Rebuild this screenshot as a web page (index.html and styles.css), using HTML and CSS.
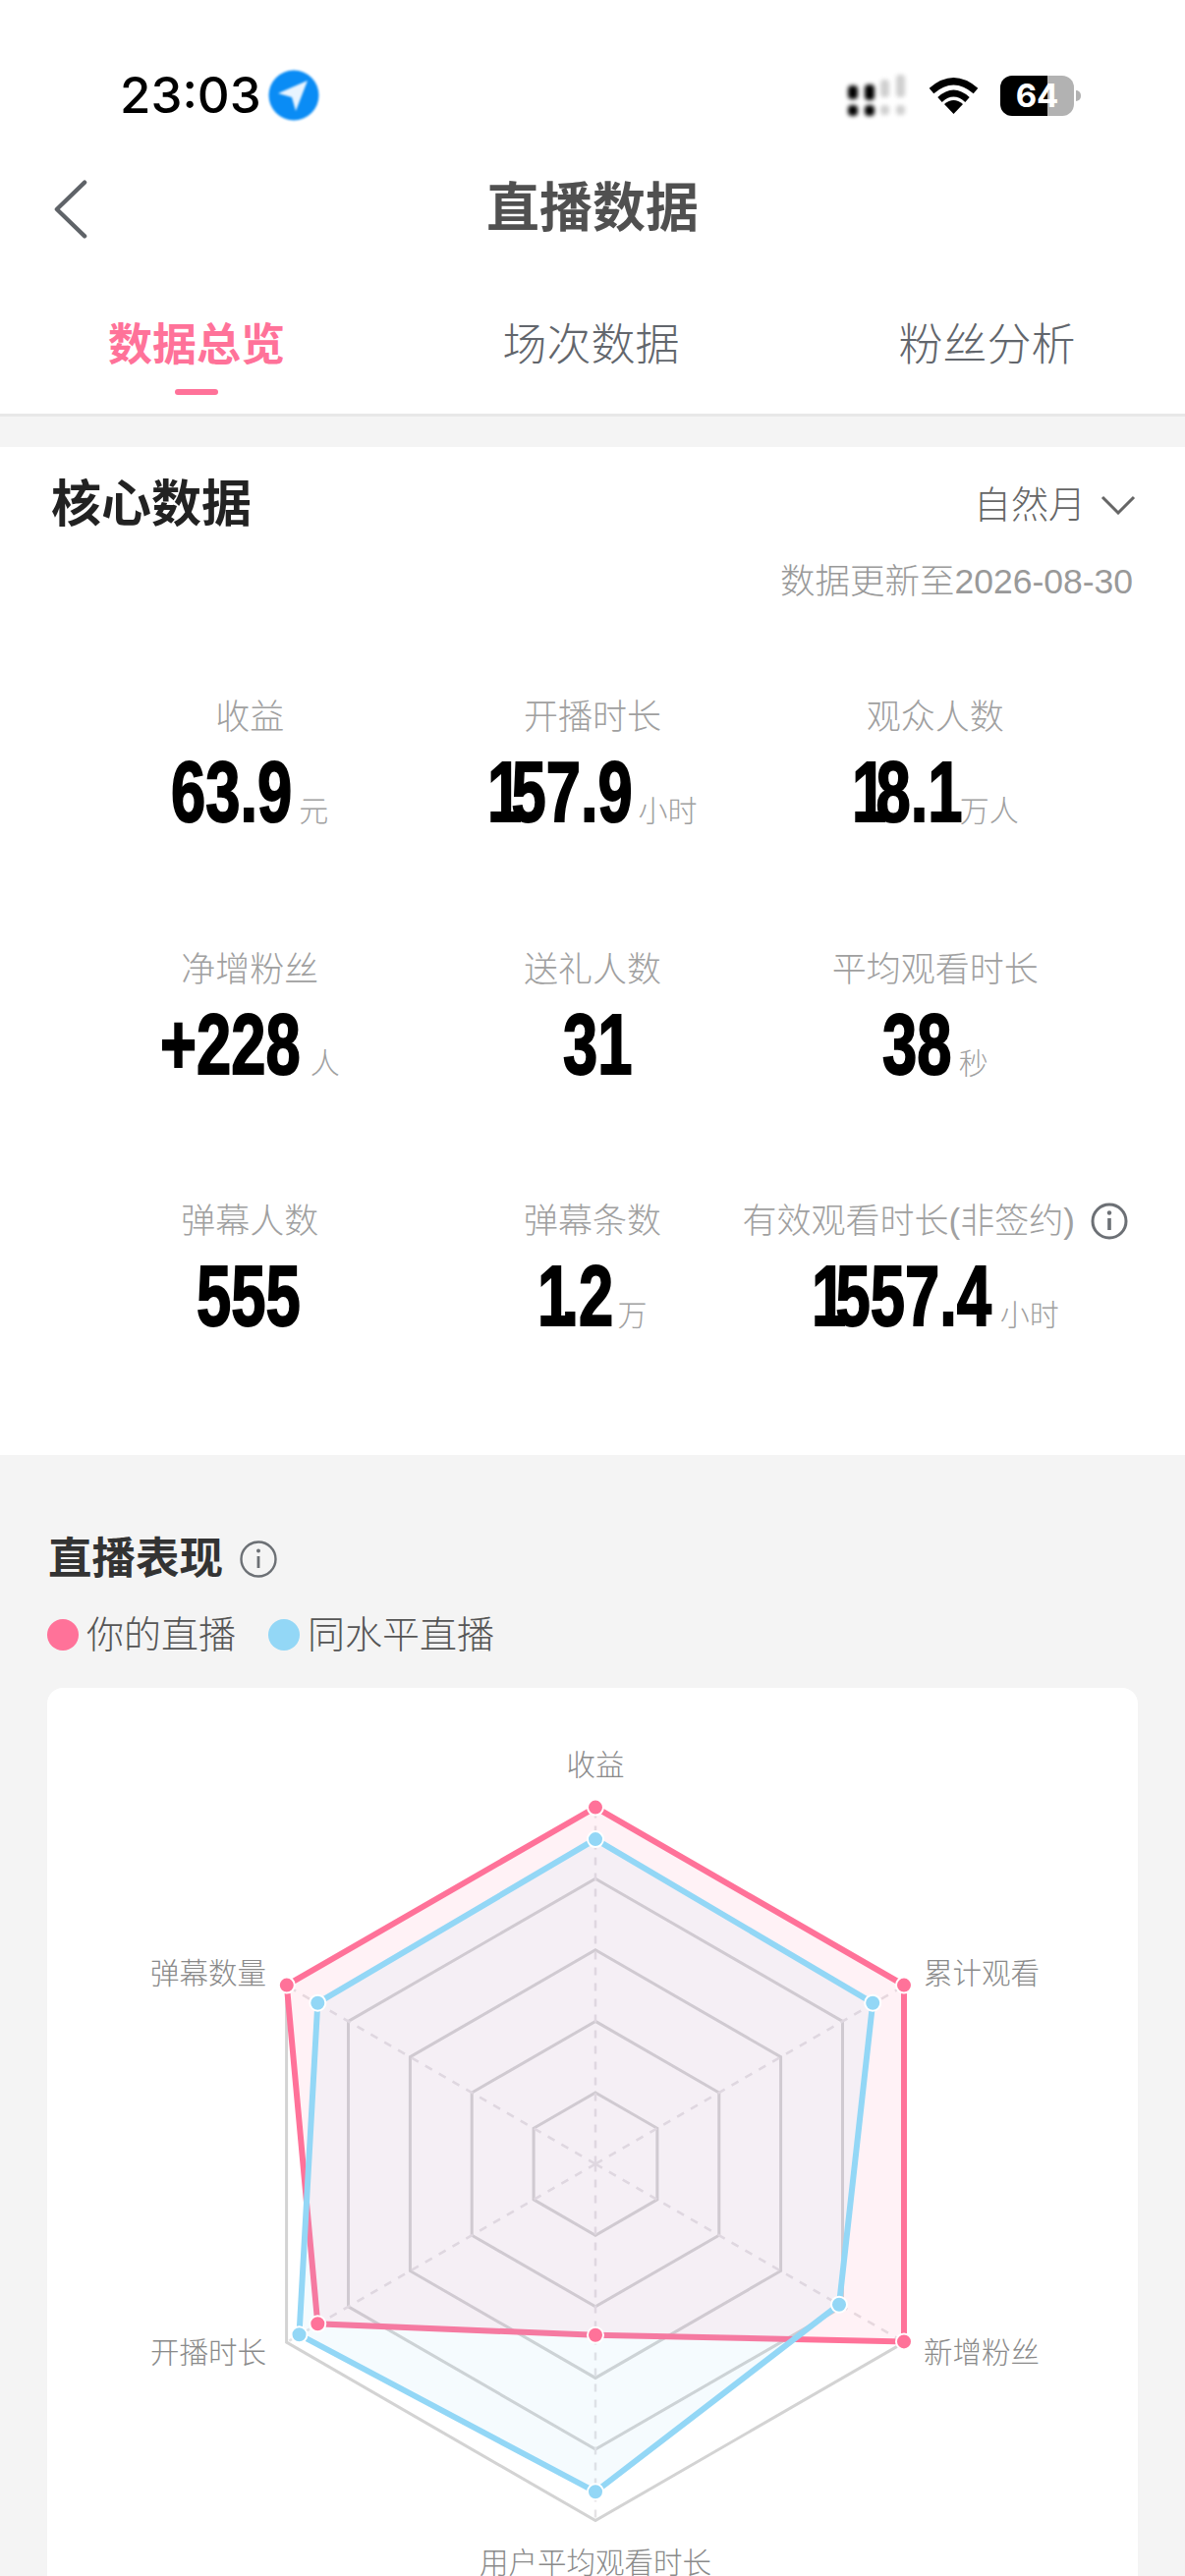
FILE: index.html
```html
<!DOCTYPE html>
<html lang="zh">
<head>
<meta charset="utf-8">
<title>直播数据</title>
<link rel="stylesheet" href="styles.css">
</head>
<body>
<header class="top">
  <div class="status">
    <div class="status-left">
      <span class="time">23:03</span>
      <svg class="loc" viewBox="0 0 54 54"><circle cx="27" cy="27" r="25.5" fill="#0a8cf5"/><path d="M41 12 L11 25 L25 29 L29 43 Z" fill="#e8f4ff"/></svg>
    </div>
    <div class="status-right">
      <svg class="signal" viewBox="0 0 64 46"><g fill="#000"><rect x="3" y="13" width="10" height="14" rx="4"/><rect x="3" y="33" width="10" height="11" rx="4"/><rect x="20" y="12" width="10" height="16" rx="4"/><rect x="20" y="33" width="10" height="11" rx="4"/></g><g fill="#cfcfcf"><rect x="36" y="7" width="9" height="18" rx="4"/><rect x="36" y="33" width="9" height="10" rx="4"/><rect x="52" y="2" width="9" height="23" rx="4"/><rect x="52" y="33" width="9" height="10" rx="4"/></g></svg>
      <svg class="wifi" viewBox="0 0 51 38"><path d="M3 14.5 Q25.5 -5 48 14.5" fill="none" stroke="#000" stroke-width="7"/><path d="M11.5 23.5 Q25.5 10.5 39.5 23.5" fill="none" stroke="#000" stroke-width="6.5"/><path d="M25.5 38 L16 28 Q25.5 20 35 28 Z" fill="#000"/></svg>
      <div class="battery"><span class="battery-level">64</span><span class="battery-nub"></span></div>
    </div>
  </div>
  <div class="nav">
    <svg class="back" viewBox="0 0 36 64"><path d="M33 3 L3 32 L33 61" fill="none" stroke="#5f6368" stroke-width="4.5" stroke-linecap="round" stroke-linejoin="round"/></svg>
    <h1 class="title">直播数据</h1>
  </div>
  <nav class="tabs">
    <div class="tab tab-active"><span>数据总览</span><i class="tab-bar"></i></div>
    <div class="tab"><span>场次数据</span><i class="tab-bar tab-bar-off"></i></div>
    <div class="tab"><span>粉丝分析</span><i class="tab-bar tab-bar-off"></i></div>
  </nav>
</header>

<section class="core">
  <div class="core-head">
    <h2 class="core-title">核心数据</h2>
    <div class="period">自然月<svg class="caret" viewBox="0 0 36 20"><path d="M2 2 L18 18 L34 2" fill="none" stroke="#666" stroke-width="3"/></svg></div>
  </div>
  <p class="updated">数据更新至2026-08-30</p>
  <div class="stats">
    <div class="stat"><div class="label">收益</div><div class="value"><span class="num" style="width:124px">63.9</span><span class="unit">元</span></div></div>
    <div class="stat"><div class="label">开播时长</div><div class="value"><span class="num" style="width:147px"><span class="one">1</span>57.9</span><span class="unit">小时</span></div></div>
    <div class="stat"><div class="label">观众人数</div><div class="value"><span class="num" style="width:104px"><span class="one">1</span>8.<span class="one">1</span></span><span class="unit">万人</span></div></div>
    <div class="stat"><div class="label">净增粉丝</div><div class="value"><span class="num" style="width:147px">+228</span><span class="unit">人</span></div></div>
    <div class="stat"><div class="label">送礼人数</div><div class="value"><span class="num" style="width:60px">3<span class="one">1</span></span></div></div>
    <div class="stat"><div class="label">平均观看时长</div><div class="value"><span class="num" style="width:72px">38</span><span class="unit">秒</span></div></div>
    <div class="stat"><div class="label">弹幕人数</div><div class="value"><span class="num" style="width:108px">555</span></div></div>
    <div class="stat"><div class="label">弹幕条数</div><div class="value"><span class="num" style="width:75px"><span class="one">1</span>.2</span><span class="unit">万</span></div></div>
    <div class="stat"><div class="label label-info">有效观看时长(非签约)<svg class="info info-stat" viewBox="0 0 38 38"><circle cx="19" cy="19" r="17" fill="none" stroke="#6c7075" stroke-width="3"/><rect x="17.2" y="16" width="3.6" height="12" fill="#6c7075"/><circle cx="19" cy="10.5" r="2.2" fill="#6c7075"/></svg></div><div class="value"><span class="num" style="width:186px"><span class="one">1</span>557.4</span><span class="unit">小时</span></div></div>
  </div>
</section>

<section class="perf">
  <div class="perf-head">
    <h2 class="perf-title">直播表现</h2>
    <svg class="info" viewBox="0 0 38 38"><circle cx="19" cy="19" r="17.5" fill="none" stroke="#6c7075" stroke-width="2.4"/><rect x="17.6" y="16" width="2.8" height="12" fill="#6c7075"/><circle cx="19" cy="10.5" r="2" fill="#6c7075"/></svg>
  </div>
  <div class="legend">
    <span class="legend-dot dot-pink"></span><span class="legend-text">你的直播</span>
    <span class="legend-dot dot-blue"></span><span class="legend-text">同水平直播</span>
  </div>
  <div class="card">
    <svg class="radar" viewBox="48 1718 1110 982">
      <g class="rings">
        <polygon points="606,1839.6 920.4,2021.1 920.4,2384.1 606,2565.6 291.6,2384.1 291.6,2021.1"/>
        <polygon points="606,1912.2 857.5,2057.4 857.5,2347.8 606,2493 354.5,2347.8 354.5,2057.4"/>
        <polygon points="606,1984.8 794.6,2093.7 794.6,2311.5 606,2420.4 417.4,2311.5 417.4,2093.7"/>
        <polygon points="606,2057.4 731.8,2130 731.8,2275.2 606,2347.8 480.2,2275.2 480.2,2130"/>
        <polygon points="606,2130 668.9,2166.3 668.9,2238.9 606,2275.2 543.1,2238.9 543.1,2166.3"/>
      </g>
      <g class="spokes">
        <line x1="606" y1="2202.6" x2="606" y2="1839.6"/>
        <line x1="606" y1="2202.6" x2="920.4" y2="2021.1"/>
        <line x1="606" y1="2202.6" x2="920.4" y2="2384.1"/>
        <line x1="606" y1="2202.6" x2="606" y2="2565.6"/>
        <line x1="606" y1="2202.6" x2="291.6" y2="2384.1"/>
        <line x1="606" y1="2202.6" x2="291.6" y2="2021.1"/>
      </g>
      <polygon class="area-pink" points="606,1839.6 920,2020.6 920,2383.4 606,2376.8 323.3,2365.3 291.8,2020.6"/>
      <polygon class="area-blue" points="606,1872.1 888.2,2038.7 854,2345.7 606,2536.3 304.5,2376.3 323.3,2038.7"/>
      <g class="dots-pink">
        <circle cx="606" cy="1839.6" r="8"/><circle cx="920" cy="2020.6" r="8"/><circle cx="920" cy="2383.4" r="8"/><circle cx="606" cy="2376.8" r="8"/><circle cx="323.3" cy="2365.3" r="8"/><circle cx="291.8" cy="2020.6" r="8"/>
      </g>
      <g class="dots-blue">
        <circle cx="606" cy="1872.1" r="8"/><circle cx="888.2" cy="2038.7" r="8"/><circle cx="854" cy="2345.7" r="8"/><circle cx="606" cy="2536.3" r="8"/><circle cx="304.5" cy="2376.3" r="8"/><circle cx="323.3" cy="2038.7" r="8"/>
      </g>
      <g class="axis-labels">
        <text x="606" y="1807" text-anchor="middle">收益</text>
        <text x="940" y="2019">累计观看</text>
        <text x="940" y="2405">新增粉丝</text>
        <text x="606" y="2619" text-anchor="middle">用户平均观看时长</text>
        <text x="271" y="2405" text-anchor="end">开播时长</text>
        <text x="271" y="2019" text-anchor="end">弹幕数量</text>
      </g>
    </svg>
  </div>
</section>
</body>
</html>
```
FILE: styles.css
```css
* { box-sizing: border-box; }
html, body { margin: 0; padding: 0; }
body {
  width: 1206px;
  height: 2622px;
  overflow: hidden;
  background: #f4f4f4;
  font-family: "Liberation Sans", "Noto Sans CJK SC", sans-serif;
}
h1, h2, p { margin: 0; font-weight: inherit; font-size: inherit; }

.top { background: #fff; border-bottom: 3px solid #e8e8e8; }

.status {
  height: 160px;
  padding: 34px 106px 0 122px;
  display: flex;
  justify-content: space-between;
  align-items: center;
}
.status-left { display: flex; align-items: center; gap: 6px; }
.time { font-family: Inter, "Liberation Sans", sans-serif; font-size: 51px; font-weight: 500; color: #000; line-height: 60px; }
.loc { width: 54px; height: 54px; filter: blur(.8px); }
.status-right { display: flex; align-items: center; }
.signal { width: 64px; height: 46px; filter: blur(2px); margin-right: 21px; }
.wifi { width: 51px; height: 38px; margin-right: 22px; }
.battery {
  position: relative;
  width: 75px;
  height: 41px;
  border-radius: 12px;
  background: linear-gradient(90deg, #000 0 48.5px, #b2b2b2 48.5px);
  display: flex;
  align-items: center;
  justify-content: center;
  margin-right: 7px;
}
.battery-level { font-family: Inter, "Liberation Sans", sans-serif; font-weight: 700; font-size: 33px; line-height: 41px; color: #fff; }
.battery-nub { position: absolute; right: -7px; top: 15px; width: 5px; height: 11px; border-radius: 0 5px 5px 0; background: #b2b2b2; }

.nav { height: 104px; position: relative; display: flex; align-items: center; justify-content: center; }
.back { position: absolute; left: 55px; top: 21px; width: 34px; height: 64px; }
.title { font-size: 54px; font-weight: 700; color: #505050; line-height: 70px; }

.tabs { display: grid; grid-template-columns: 400px 403px 403px; }
.tab { display: flex; flex-direction: column; align-items: center; padding-top: 65px; font-size: 45px; font-weight: 300; line-height: 46px; color: #62666c; }
.tab-active { color: #ff7299; font-weight: 700; }
.tab-bar { display: block; width: 44px; height: 6px; margin-top: 21px; margin-bottom: 19px; background: #ff7299; border-radius: 3px; }
.tab-bar-off { background: transparent; }

.core { margin-top: 31px; background: #fff; height: 1026px; }
.core-head { display: flex; justify-content: space-between; align-items: center; padding: 32px 50px 0 52px; height: 86px; }
.core-title { font-size: 51px; font-weight: 700; color: #222; line-height: 54px; }
.period { display: flex; align-items: center; font-size: 38px; font-weight: 300; color: #666; line-height: 54px; }
.caret { width: 36px; height: 20px; margin-left: 15px; }
.updated { margin-top: 29px; padding-right: 53px; text-align: right; font-size: 35.5px; font-weight: 300; line-height: 44px; color: #999; }

.stats { margin-top: 94px; padding: 0 80px; display: grid; grid-template-columns: repeat(3, minmax(0, 1fr)); grid-auto-rows: 256.5px; }
.stat { display: flex; flex-direction: column; align-items: center; }
.label { font-size: 35px; font-weight: 300; line-height: 44px; color: #a0a0a0; white-space: nowrap; }
.label-info { display: flex; align-items: center; gap: 16px; }
.value { display: flex; align-items: baseline; justify-content: center; margin-top: 9px; }
.num {
  display: block;
  flex: none;
  min-width: 0;
  font-family: "Liberation Sans", sans-serif;
  font-weight: 700;
  font-size: 88px;
  line-height: 90px;
  color: #000;
  white-space: nowrap;
  -webkit-text-stroke: 2px #000;
  transform: scaleX(.72);
  transform-origin: 0 50%;
}
.one { letter-spacing: -15px; }
.unit { margin-left: 6px; font-size: 30px; font-weight: 300; line-height: 30px; color: #a0a0a0; }

.perf { padding: 76px 48px 0; }
.perf-head { display: flex; align-items: center; gap: 17px; height: 60px; padding-left: 1px; }
.perf-title { font-size: 44.5px; font-weight: 700; color: #333; line-height: 60px; }
.info { width: 38px; height: 38px; flex: none; }
.legend { display: flex; align-items: center; margin-top: 25px; height: 44px; font-size: 38px; font-weight: 300; color: #555; line-height: 44px; }
.legend-dot { width: 32px; height: 32px; border-radius: 50%; margin-right: 8px; }
.dot-pink { background: #ff7299; }
.dot-blue { background: #93d7f6; margin-left: 33px; }
.card { margin-top: 32px; height: 982px; background: #fff; border-radius: 16px; }
.radar { display: block; width: 1110px; height: 982px; }
.rings polygon { fill: none; stroke: #d3d3d3; stroke-width: 3; }
.spokes line { stroke: #e5e3e5; stroke-width: 2.5; stroke-dasharray: 8 8; }
.area-pink { fill: rgba(255, 114, 153, .09); stroke: #ff7299; stroke-width: 6; }
.area-blue { fill: rgba(147, 215, 246, .09); stroke: #93d7f6; stroke-width: 6; }
.dots-pink circle { fill: #ff7299; stroke: #fff; stroke-width: 2; }
.dots-blue circle { fill: #93d7f6; stroke: #fff; stroke-width: 2; }
.axis-labels text { font-size: 29.5px; font-weight: 300; fill: #8a8a8a; }
```
